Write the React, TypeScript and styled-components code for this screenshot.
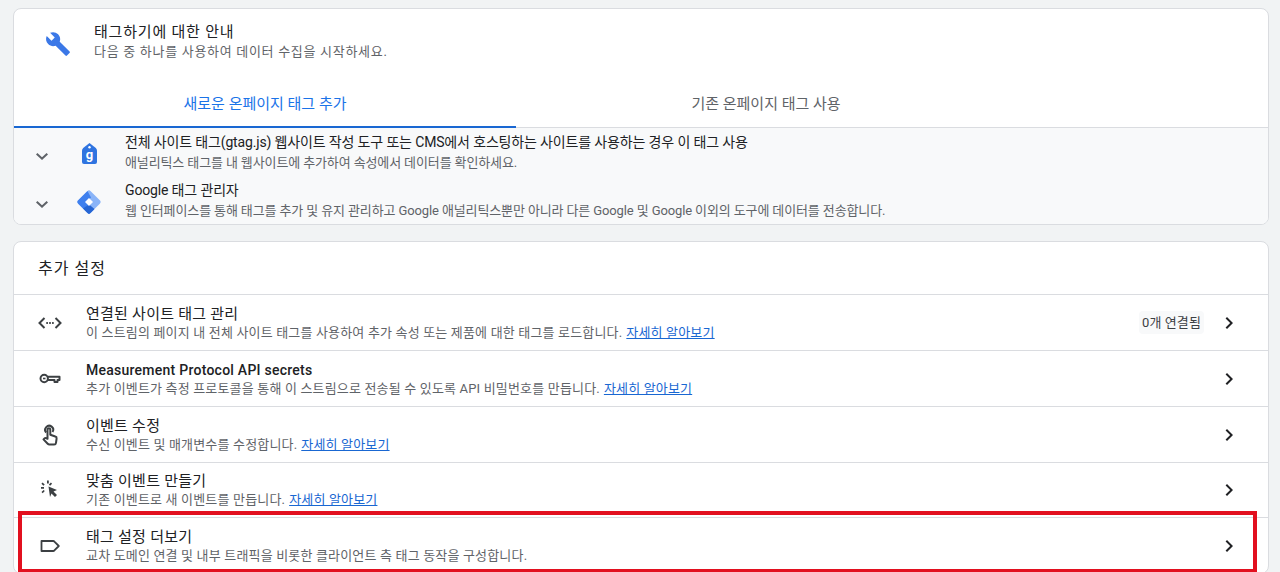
import React from "react";
import styled, { createGlobalStyle } from "styled-components";

const Global = createGlobalStyle`
  html, body { margin: 0; padding: 0; height: 572px; overflow: hidden; background: #f1f3f4; }
  body { font-family: Roboto, "Noto Sans CJK KR", sans-serif; color: #202124; }
`;
const Page = styled.div`
  position: relative; height: 572px; overflow: hidden;
  padding: 8px 11px 0 13px; box-sizing: border-box;
  display: flex; flex-direction: column; gap: 16px;
`;
const Card = styled.section`
  background: #fff; border: 1px solid #dadce0; border-radius: 8px; overflow: hidden; flex: none;
`;
const Intro = styled.div`
  height: 69px; display: flex; align-items: flex-start; padding: 13px 0 0 31px; box-sizing: border-box;
`;
const IntroIcon = styled.div`
  width: 49px; height: 26px; margin-top: 9px; flex: none; color: #3b78e7;
`;
const IntroTitle = styled.div`font-size: 15px; line-height: 20px; letter-spacing: .8px;`;
const IntroSub = styled.div`font-size: 13px; line-height: 20px; color: #5f6368; letter-spacing: .7px;`;
const Tabs = styled.div`display: flex; height: 49px; border-bottom: 1px solid #dadce0;`;
const Tab = styled.div<{ $active?: boolean }>`
  flex: 0 0 ${p => (p.$active ? "502px" : "500px")};
  display: flex; align-items: center; justify-content: center; padding-top: 1px; box-sizing: border-box;
  font-size: 15px;
  color: ${p => (p.$active ? "#1a73e8" : "#5f6368")};
  border-bottom: 2px solid ${p => (p.$active ? "#1967d2" : "transparent")};
  margin-bottom: -1px;
`;
const Methods = styled.div`background: #f8f9fa; height: 96px; display: flex; flex-direction: column;`;
const Method = styled.div`display: flex; height: 48px; align-items: center;`;
const MethodChevron = styled.div`
  width: 12px; flex: none; margin-left: 22px; color: #5f6368; display: flex; margin-top: 8px;
`;
const MethodLogo = styled.div`
  width: 48px; flex: none; display: flex; margin-left: 29px; margin-top: 3px;
`;
const MethodTitle = styled.div`font-size: 14px; line-height: 18px; letter-spacing: -.15px;`;
const MethodSub = styled.div`
  font-size: 13px; line-height: 20px; margin-top: 2px; color: #5f6368; letter-spacing: -.12px;
`;
const MethodText = styled.div`margin-top: 2px;`;
const SettingsHead = styled.h2`
  margin: 0; height: 52px; padding: 0 24px 2px; display: flex; align-items: center;
  font-size: 16px; font-weight: 400; letter-spacing: 1px; box-sizing: border-box;
`;
const Row = styled.div<{ $short?: boolean }>`
  height: ${p => (p.$short ? 55 : 56)}px; box-sizing: border-box; border-top: 1px solid #dadce0;
  display: flex; align-items: center; padding-left: 24px; padding-right: 27px;
`;
const RowIcon = styled.div`width: 48px; flex: none; display: flex; color: #3c4043;`;
const RowText = styled.div`flex: 1; min-width: 0; margin-top: 1px;`;
const RowTitle = styled.div<{ $medium?: boolean }>`
  font-size: ${p => (p.$medium ? 14 : 15)}px; line-height: 19px; letter-spacing: .25px;
  font-weight: ${p => (p.$medium ? 500 : 400)};
`;
const RowSub = styled.div`font-size: 13px; line-height: 18px; color: #5f6368; letter-spacing: .17px;`;
const Learn = styled.a`color: #1967d2; text-decoration: underline; margin-left: 4px;`;
const Badge = styled.span`
  background: #f8f9fa; border-radius: 4px; padding: 0 3px; height: 23px; line-height: 23px;
  font-size: 13px; color: #3c4043; margin-right: 13px; letter-spacing: .1px;
`;
const Arrow = styled.div`width: 24px; height: 24px; flex: none; color: #202124;`;
const Highlight = styled.div`
  position: absolute; left: 18px; top: 511px; width: 1239px; height: 61px; box-sizing: border-box;
  border: 4px solid #e2101f; border-bottom-width: 3px; pointer-events: none;
`;

const Chevron = () => (
  <svg width="24" height="24" viewBox="0 0 24 24" fill="currentColor">
    <path d="M10 6 8.59 7.41 13.17 12l-4.58 4.59L10 18l6-6z" />
  </svg>
);
const Down = () => (
  <svg width="12" height="7" viewBox="6 8.500 12 7.500" fill="currentColor" preserveAspectRatio="none">
    <path d="M7.41 8.59 12 13.17l4.59-4.58L18 10l-6 6-6-6z" />
  </svg>
);
const Wrench = () => (
  <svg width="26" height="26" viewBox="0 0 24 24" fill="currentColor">
    <path d="M22.7 19l-9.1-9.1c.9-2.3.4-5-1.5-6.9-2-2-5-2.4-7.4-1.3L9 6 6 9 1.6 4.700C.4 7.100.9 10.100 2.900 12.100c1.900 1.900 4.600 2.400 6.900 1.500l9.100 9.100c.4.4 1 .4 1.400 0l2.300-2.300c.5-.4.5-1.100.1-1.400z" />
  </svg>
);
const GtagText = styled.text`
  font-family: Roboto, sans-serif; font-size: 13px; font-weight: 700; fill: #fff; text-anchor: middle;
`;
const GtagLogo = () => (
  <svg width="15" height="21" viewBox="0 0 15 21" style={{ marginLeft: 5 }}>
    <path d="M7.500 0 13.800 5Q15 6 15 7.500V19a2 2 0 0 1-2 2H2a2 2 0 0 1-2-2V7.500Q0 6 1.200 5Z" fill="#2f74e0" />
    <circle cx="7.500" cy="4.300" r="1.200" fill="#fff" />
    <GtagText x="7.500" y="15.500">g</GtagText>
  </svg>
);
const GtmLogo = () => (
  <svg width="24" height="24" viewBox="0 0 24 24">
    <path d="M13.700 1.200 22.800 10.300a2.400 2.400 0 0 1 0 3.400L13.700 22.800a2.400 2.400 0 0 1-3.400 0L1.200 13.700a2.400 2.400 0 0 1 0-3.400L10.300 1.200a2.400 2.400 0 0 1 3.400 0Z" fill="#8ab4f8" />
    <path d="M10.500 1 1.200 10.300a2.400 2.400 0 0 0 0 3.400L10.300 22.800a2.400 2.400 0 0 0 3.400 0L17 19.500 9.500 12 14 7.500Z" fill="#3f80ee" />
    <path d="M6 18.500 10.300 22.800a2.400 2.400 0 0 0 3.400 0L17.500 19 12 14.500Z" fill="#2766d3" />
    <path d="M12 8 16 12 12 16 8 12Z" fill="#fff" />
  </svg>
);
const CodeIcon = () => (
  <svg width="24" height="24" viewBox="0 0 24 24" fill="none" stroke="currentColor" strokeWidth="2">
    <path d="M6.500 7 1.500 12l5 5M17.500 7l5 5-5 5" />
    <path d="M8.300 12h1.600M11.200 12h1.600M14.100 12h1.600" />
  </svg>
);
const KeyIcon = () => (
  <svg width="24" height="24" viewBox="0 0 24 24" fill="none" stroke="currentColor" strokeWidth="2">
    <circle cx="6.200" cy="11.500" r="3.700" />
    <path d="M10 9.800h11.500v3.200h-2v2h-3v-2H10" strokeLinejoin="round" />
    <path d="M5 11.500h2.500" strokeWidth="1.600" />
  </svg>
);
const TouchIcon = () => (
  <svg width="24" height="24" viewBox="0 0 24 24" fill="none" stroke="currentColor" strokeWidth="2" strokeLinejoin="round">
    <path d="M8.200 9.500A4 4 0 1 1 14.500 9" />
    <path d="M9.500 15.800V6.600a1.400 1.400 0 0 1 2.800 0v5.200l5 1.700a1.800 1.800 0 0 1 1.300 2l-.6 4.300a2 2 0 0 1-2 1.700h-4.700a2.200 2.200 0 0 1-1.600-.7l-4.200-4.400 1-1c.4-.4 1-.5 1.500-.3z" />
  </svg>
);
const ClickIcon = () => (
  <svg width="24" height="24" viewBox="0 0 24 24" fill="currentColor" style={{ marginLeft: -1, marginTop: -2 }}>
    <path d="M11.500 9.500 20 13l-3.500 1.500L20 18l-2 2-3.500-3.500L13 20z" />
    <path d="M10 3.500h1.800v3H10zM4 10h3v1.800H4zM13.900 5.500l1.200 1.200-2 2-1.200-1.200zM5.600 5.500l2.100 2.100-1.200 1.200-2.100-2.100zM6.600 12.900l1.200 1.200-2.100 2.100-1.200-1.200z" />
  </svg>
);
const LabelIcon = () => (
  <svg width="24" height="24" viewBox="0 0 24 24" fill="none" stroke="currentColor" strokeWidth="1.800" strokeLinejoin="round">
    <path d="M3.500 7h11.700a1.500 1.500 0 0 1 1.200.6L20.800 12l-4.400 4.400a1.500 1.500 0 0 1-1.200.6H3.500z" />
  </svg>
);

const rows = [
  { icon: <CodeIcon />, title: "연결된 사이트 태그 관리", sub: "이 스트림의 페이지 내 전체 사이트 태그를 사용하여 추가 속성 또는 제품에 대한 태그를 로드합니다.", link: true, badge: "0개 연결됨" },
  { icon: <KeyIcon />, title: "Measurement Protocol API secrets", medium: true, sub: "추가 이벤트가 측정 프로토콜을 통해 이 스트림으로 전송될 수 있도록 API 비밀번호를 만듭니다.", link: true },
  { icon: <TouchIcon />, title: "이벤트 수정", sub: "수신 이벤트 및 매개변수를 수정합니다.", link: true },
  { icon: <ClickIcon />, title: "맞춤 이벤트 만들기", sub: "기존 이벤트로 새 이벤트를 만듭니다.", link: true, short: true },
  { icon: <LabelIcon />, title: "태그 설정 더보기", sub: "교차 도메인 연결 및 내부 트래픽을 비롯한 클라이언트 측 태그 동작을 구성합니다." },
];

export default function App() {
  return (
    <>
      <Global />
      <Page>
        <Card>
          <Intro>
            <IntroIcon><Wrench /></IntroIcon>
            <div>
              <IntroTitle>태그하기에 대한 안내</IntroTitle>
              <IntroSub>다음 중 하나를 사용하여 데이터 수집을 시작하세요.</IntroSub>
            </div>
          </Intro>
          <Tabs>
            <Tab $active>새로운 온페이지 태그 추가</Tab>
            <Tab>기존 온페이지 태그 사용</Tab>
          </Tabs>
          <Methods>
            <Method>
              <MethodChevron><Down /></MethodChevron>
              <MethodLogo><GtagLogo /></MethodLogo>
              <MethodText>
                <MethodTitle>전체 사이트 태그(gtag.js) 웹사이트 작성 도구 또는 CMS에서 호스팅하는 사이트를 사용하는 경우 이 태그 사용</MethodTitle>
                <MethodSub>애널리틱스 태그를 내 웹사이트에 추가하여 속성에서 데이터를 확인하세요.</MethodSub>
              </MethodText>
            </Method>
            <Method>
              <MethodChevron><Down /></MethodChevron>
              <MethodLogo><GtmLogo /></MethodLogo>
              <MethodText>
                <MethodTitle>Google 태그 관리자</MethodTitle>
                <MethodSub>웹 인터페이스를 통해 태그를 추가 및 유지 관리하고 Google 애널리틱스뿐만 아니라 다른 Google 및 Google 이외의 도구에 데이터를 전송합니다.</MethodSub>
              </MethodText>
            </Method>
          </Methods>
        </Card>
        <Card>
          <SettingsHead>추가 설정</SettingsHead>
          {rows.map(r => (
            <Row key={r.title} $short={r.short}>
              <RowIcon>{r.icon}</RowIcon>
              <RowText>
                <RowTitle $medium={r.medium}>{r.title}</RowTitle>
                <RowSub>{r.sub}{r.link && <Learn>자세히 알아보기</Learn>}</RowSub>
              </RowText>
              {r.badge && <Badge>{r.badge}</Badge>}
              <Arrow><Chevron /></Arrow>
            </Row>
          ))}
        </Card>
        <Highlight />
      </Page>
    </>
  );
}
